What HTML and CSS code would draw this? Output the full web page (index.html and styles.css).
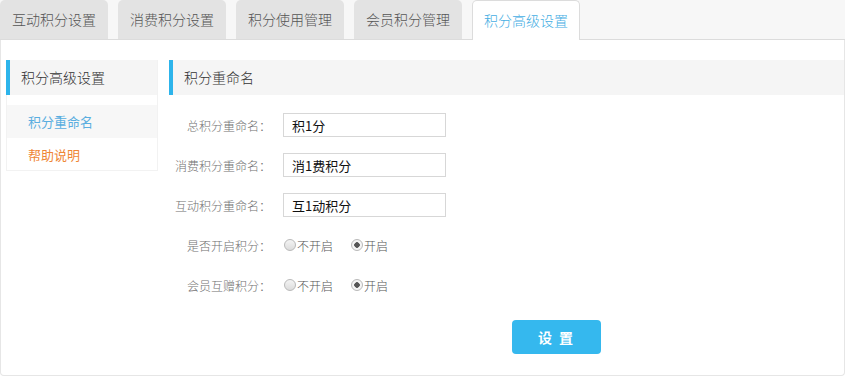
FILE: index.html
```html
<!DOCTYPE html>
<html lang="zh-CN">
  <head>
    <meta charset="UTF-8" />
    <meta name="viewport" content="width=device-width, initial-scale=1.0" />
    <title>积分高级设置</title>
    <link rel="stylesheet" href="styles.css">
  </head>
  <body>
    <div class="tabs">
      <div class="tab">互动积分设置</div>
      <div class="tab">消费积分设置</div>
      <div class="tab">积分使用管理</div>
      <div class="tab">会员积分管理</div>
      <div class="tab active">积分高级设置</div>
    </div>
    <div class="panel">
      <div class="side">
        <div class="box-title">积分高级设置</div>
        <ul class="side-menu">
          <li class="current">积分重命名</li>
          <li class="help">帮助说明</li>
        </ul>
      </div>
      <div class="main">
        <div class="box-title">积分重命名</div>
        <form class="form">
          <div class="row">
            <label class="label">总积分重命名：</label>
            <input type="text" class="text" value="积1分" />
          </div>
          <div class="row">
            <label class="label">消费积分重命名：</label>
            <input type="text" class="text" value="消1费积分" />
          </div>
          <div class="row">
            <label class="label">互动积分重命名：</label>
            <input type="text" class="text" value="互1动积分" />
          </div>
          <div class="row">
            <label class="label">是否开启积分：</label>
            <label class="choice"><input type="radio" name="open" />不开启</label>
            <label class="choice"><input type="radio" name="open" checked />开启</label>
          </div>
          <div class="row">
            <label class="label">会员互赠积分：</label>
            <label class="choice"><input type="radio" name="gift" />不开启</label>
            <label class="choice"><input type="radio" name="gift" checked />开启</label>
          </div>
          <button type="button" class="btn">设 置</button>
        </form>
      </div>
    </div>
  </body>
</html>
```

FILE: styles.css
```css
body {
  margin: 0;
  font-family: "Noto Sans CJK SC", "Liberation Sans", sans-serif;
  font-size: 12px;
  font-weight: 300;
  color: #666;
  background: #fff;
}
.tabs {
  display: flex;
  gap: 10px;
  height: 40px;
  box-sizing: border-box;
  background: #f7f7f7;
  border-bottom: 1px solid #dcdcdc;
}
.tab {
  width: 108px;
  height: 39px;
  line-height: 39px;
  text-align: center;
  font-size: 14px;
  color: #555;
  background: #e3e3e3;
  border-radius: 5px 5px 0 0;
}
.tab.active {
  height: 40px;
  box-sizing: border-box;
  background: #fff;
  color: #45aee3;
  border: 1px solid #dcdcdc;
  border-bottom: none;
}
.panel {
  display: flex;
  gap: 11px;
  height: 336px;
  box-sizing: border-box;
  padding: 20px 0 0 5px;
  border: 1px solid #e6e6e6;
  border-top: none;
  border-radius: 0 0 4px 4px;
}
.side {
  width: 152px;
  height: 111px;
  box-sizing: border-box;
  border: 1px solid #f2f2f2;
  border-top: none;
}
.box-title {
  height: 35px;
  line-height: 35px;
  padding-left: 11px;
  font-size: 14px;
  color: #333;
  background: #f5f5f5;
  border-left: 4px solid #2db4eb;
}
.side .box-title {
  margin-left: -1px;
}
.side-menu {
  list-style: none;
  margin: 10px 0 0;
  padding: 0;
}
.side-menu li {
  height: 33px;
  line-height: 33px;
  padding-left: 21px;
  font-size: 13px;
  font-weight: 400;
}
.side-menu .current {
  color: #5aaee0;
  background: #f7f7f7;
}
.side-menu .help {
  color: #ef8636;
}
.main {
  flex: 1;
}
.form {
  display: flex;
  flex-direction: column;
  gap: 16px;
  padding-top: 18px;
}
.row {
  display: flex;
  align-items: center;
  height: 24px;
}
.label {
  width: 102px;
  margin-right: 12px;
  text-align: right;
  color: #707070;
}
.text {
  width: 163px;
  height: 24px;
  box-sizing: border-box;
  margin: 0;
  padding: 0 8px;
  border: 1px solid #d7d7d7;
  font-family: inherit;
  font-size: 13px;
  font-weight: 400;
  color: #111;
}
.choice {
  display: flex;
  align-items: center;
  width: 67px;
  color: #555;
}
.choice input {
  appearance: none;
  width: 12px;
  height: 12px;
  margin: 0 1px 0 1px;
  border: 1px solid #b9b9b9;
  border-radius: 50%;
  background: linear-gradient(#f4f4f4, #dcdcdc);
  box-sizing: border-box;
}
.choice input:checked {
  background: radial-gradient(circle, #555 0 2.5px, #f4f4f4 3px);
}
.btn {
  align-self: flex-start;
  margin: 7px 0 0 343px;
  width: 89px;
  height: 34px;
  border: none;
  border-radius: 4px;
  background: #35b8ee;
  color: #fff;
  font-family: inherit;
  font-size: 14px;
  font-weight: bold;
  letter-spacing: 2px;
  cursor: pointer;
}
```
